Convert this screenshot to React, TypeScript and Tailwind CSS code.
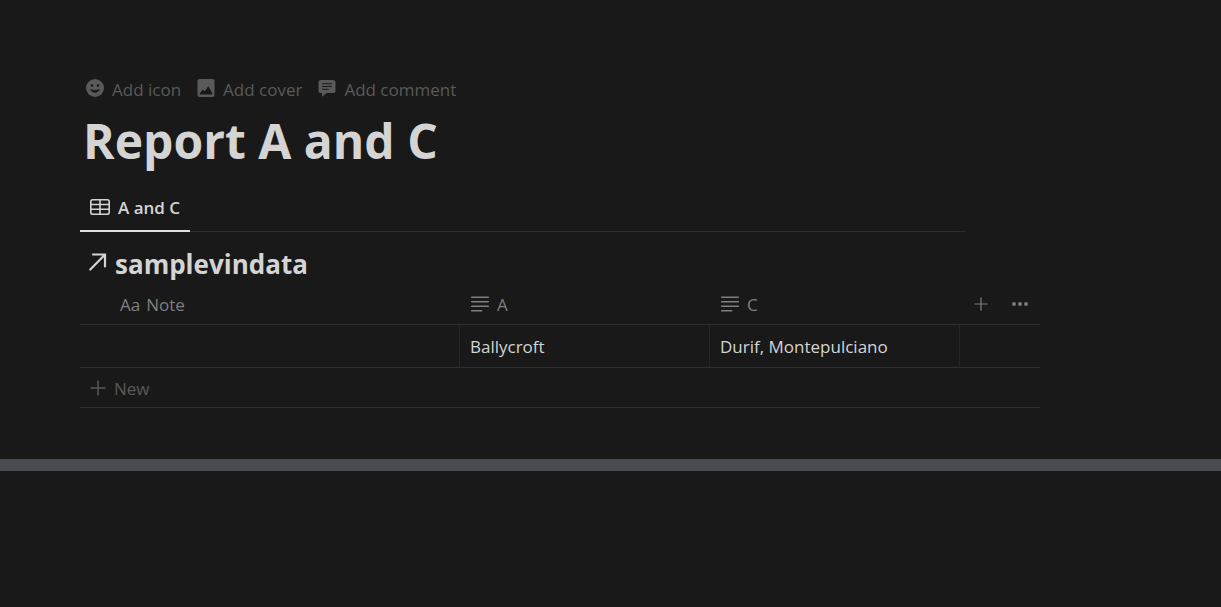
import type { ReactNode } from "react";

function SmileIcon() {
  return (
    <svg viewBox="0 0 18 18" className="size-[18px]" aria-hidden="true">
      <circle cx="9" cy="9" r="9" fill="currentColor" />
      <circle cx="6" cy="6.5" r="1.3" fill="#191919" />
      <circle cx="12" cy="6.5" r="1.3" fill="#191919" />
      <path d="M4.500 10.500c.8 1.900 2.500 2.900 4.500 2.900s3.700-1 4.500-2.900c-2.800 1-6.200 1-9 0z" fill="#191919" stroke="#191919" strokeWidth="0.500" strokeLinejoin="round" />
    </svg>
  );
}

function CoverIcon() {
  return (
    <svg viewBox="0 0 18 18" className="size-[18px]" aria-hidden="true">
      <rect x="0.500" width="17" height="18" rx="2" fill="currentColor" />
      <path d="M2.800 15.500v-1.200l3.200-3.800 1.800 1.700 3.500-5 4 7v1.300z" fill="#191919" />
    </svg>
  );
}

function CommentIcon() {
  return (
    <svg viewBox="0 0 18 18" className="size-[18px]" aria-hidden="true">
      <path d="M3 1h12a2.500 2.500 0 0 1 2.500 2.500v8A2.500 2.500 0 0 1 15 14H8.500l-3.700 3.300c-.4.300-.8.100-.8-.4V14H3a2.500 2.500 0 0 1-2.500-2.500v-8A2.500 2.500 0 0 1 3 1z" fill="currentColor" />
      <path d="M4.500 4.700h9M4.500 7.500h9M4.500 10.300h6" stroke="#191919" strokeWidth="1.100" strokeLinecap="round" />
    </svg>
  );
}

function TableIcon() {
  return (
    <svg viewBox="0 0 20 16" className="h-4 w-5" fill="none" stroke="currentColor" strokeWidth="1.600" aria-hidden="true">
      <rect x="0.800" y="0.800" width="18.400" height="14.400" rx="2" />
      <path d="M1 5.500h18M1 10.300h18M10 1v14" />
    </svg>
  );
}

function LinkArrowIcon() {
  return (
    <svg viewBox="0 0 18 18" className="size-[18px]" fill="none" stroke="currentColor" strokeWidth="2.200" strokeLinecap="round" aria-hidden="true">
      <path d="M1.300 16.500L15.800 1.800M4 1.500h12v12" />
    </svg>
  );
}

function LinesIcon() {
  return (
    <svg viewBox="0 0 18 16" className="h-4 w-[18px]" fill="none" stroke="currentColor" strokeWidth="1.500" strokeLinecap="round" aria-hidden="true">
      <path d="M.7 1.200h16.600M.7 5.700h16.600M.7 10.300h16.600M.7 14.800h10" />
    </svg>
  );
}

function PlusIcon({ className }: { className: string }) {
  return (
    <svg viewBox="0 0 16 16" className={className} fill="none" stroke="currentColor" strokeWidth="1.400" strokeLinecap="round" aria-hidden="true">
      <path d="M8 1v14M1 8h14" />
    </svg>
  );
}

function PageAction({ icon, children }: { icon: ReactNode; children: ReactNode }) {
  return (
    <button type="button" className="flex items-center gap-2">
      {icon}
      <span className="pt-[3px]">{children}</span>
    </button>
  );
}

function PropertyHeading({ name }: { name: string }) {
  return (
    <th scope="col" className="border-b border-[#2f2f2f] px-[11px] text-left font-normal">
      <div className="flex items-center gap-2">
        <LinesIcon />
        <span className="pt-0.5">{name}</span>
      </div>
    </th>
  );
}

export default function App() {
  return (
    <div className="min-h-screen bg-[#191919] font-['Open_Sans','Noto_Sans',sans-serif] text-[17px] leading-6 text-[#d4d4d4]">
      <main className="pt-[74px] pb-[51px] pl-20">
        <div className="flex h-7 items-center gap-4 pl-[6px] text-[#5a5a5a]">
          <PageAction icon={<SmileIcon />}>Add icon</PageAction>
          <PageAction icon={<CoverIcon />}>Add cover</PageAction>
          <PageAction icon={<CommentIcon />}>Add comment</PageAction>
        </div>
        <h1 className="mt-[9px] pl-[3px] text-[48px] leading-[60px] font-bold">Report A and C</h1>

        <div role="tablist" className="mt-4 mr-64 flex border-b border-[#2f2f2f]">
          <button
            type="button"
            role="tab"
            aria-selected="true"
            className="-mb-px flex h-[45px] items-center gap-2 border-b-2 border-[#e0e0e0] px-[10px] pb-1 font-semibold"
          >
            <TableIcon />
            <span className="pt-[3px]">A and C</span>
          </button>
        </div>

        <h2 className="mt-3 h-10 pl-[9px] text-[26px] leading-10 font-bold">
          <a href="#samplevindata" className="inline-flex items-center gap-2">
            <span className="pb-1">
              <LinkArrowIcon />
            </span>
            samplevindata
          </a>
        </h2>

        <table className="w-[960px] table-fixed border-separate border-spacing-0">
          <colgroup>
            <col className="w-[380px]" />
            <col className="w-[250px]" />
            <col className="w-[250px]" />
            <col className="w-20" />
          </colgroup>
          <thead>
            <tr className="h-[41px] text-[#7f7f7f]">
              <th scope="col" className="border-b border-[#2f2f2f] pt-0.5 pl-10 text-left font-normal">
                <span className="mr-[6px]" aria-hidden="true">Aa</span>
                Note
              </th>
              <PropertyHeading name="A" />
              <PropertyHeading name="C" />
              <th className="border-b border-[#2f2f2f] pr-3 pl-[14px] font-normal">
                <div className="flex items-center justify-between">
                  <button type="button" aria-label="Add property">
                    <PlusIcon className="size-[14px]" />
                  </button>
                  <button type="button" aria-label="More options">
                    <svg viewBox="0 0 16 16" className="size-4" fill="currentColor" aria-hidden="true">
                      <circle cx="2" cy="8" r="1.900" />
                      <circle cx="8" cy="8" r="1.900" />
                      <circle cx="14" cy="8" r="1.900" />
                    </svg>
                  </button>
                </div>
              </th>
            </tr>
          </thead>
          <tbody>
            <tr className="h-[43px]">
              <td className="border-r border-b border-r-[#262626] border-b-[#2f2f2f]" />
              <td className="border-r border-b border-r-[#262626] border-b-[#2f2f2f] px-[10px] pt-0.5">Ballycroft</td>
              <td className="border-r border-b border-r-[#262626] border-b-[#2f2f2f] px-[10px] pt-0.5">Durif, Montepulciano</td>
              <td className="border-b border-[#2f2f2f]" />
            </tr>
            <tr className="h-10 text-[#5a5a5a]">
              <td colSpan={4} className="border-b border-[#2f2f2f] pl-[10px]">
                <button type="button" className="flex items-center gap-2">
                  <PlusIcon className="size-4" />
                  <span className="pt-0.5">New</span>
                </button>
              </td>
            </tr>
          </tbody>
        </table>
      </main>
      <hr className="h-3 border-0 bg-[#494c50]" />
    </div>
  );
}
